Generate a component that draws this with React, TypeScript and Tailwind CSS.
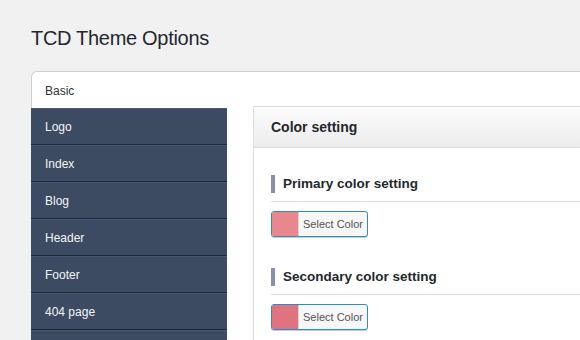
import React from "react";

const menu = ["Logo", "Index", "Blog", "Header", "Footer", "404 page", ""];

function ColorField({ label, swatch }: { label: string; swatch: string }) {
  return (
    <div className="pt-[27px]">
      <div className="flex items-center border-b border-[#dddddd] pb-[8px]">
        <span className="h-[18px] w-[4px] bg-[#8891a9]" />
        <h3 className="ml-[8px] text-[13.5px] font-bold leading-none text-[#23282d]">
          {label}
        </h3>
      </div>
      <button className="mt-[9px] flex h-[26px] w-[97px] overflow-hidden rounded-[3px] border border-[#3389c6] bg-[#f7f7f7] shadow-[0_1px_0_#ccc]">
        <span className={`h-full w-[27px] border-r border-[#d6d6d6] ${swatch}`} />
        <span className="flex-1 self-center text-center text-[11px] leading-none text-[#555]">
          Select Color
        </span>
      </button>
    </div>
  );
}

export default function App() {
  return (
    <div
      className="h-[340px] w-[580px] overflow-hidden bg-[#f1f1f1] pl-[31px] pt-[28px]"
      style={{ fontFamily: '"Liberation Sans", Arial, sans-serif' }}
    >
      <h1 className="text-[20px] leading-none tracking-[-0.3px] text-[#23282d]">
        TCD Theme Options
      </h1>

      <div className="mt-[23px] w-[620px] rounded-tl-[6px] border-l border-t border-[#d0d0d0] bg-white">
        <div className="flex h-[34px] items-center pl-[13px] pt-[3px] text-[12px] text-[#333]">
          Basic
        </div>

        <div className="flex">
          <ul className="-ml-px mt-[2px] w-[196px]">
            {menu.map((item, i) => (
              <li
                key={i}
                className="flex h-[37px] items-center border-b border-t border-b-[#1f2836] border-t-[#4b5871] bg-[#3c4a62] pl-[14px] text-[12px] text-[#f4f5f7]"
              >
                {item}
              </li>
            ))}
          </ul>

          <div className="ml-[26px] flex-1 border border-[#dddddd]">
            <div className="flex h-[41px] items-center border-b border-[#dddddd] bg-gradient-to-b from-[#fcfcfc] to-[#ececec] pl-[17px]">
              <h2 className="text-[14px] font-bold leading-none text-[#23282d]">
                Color setting
              </h2>
            </div>
            <div className="pl-[17px]">
              <ColorField label="Primary color setting" swatch="bg-[#e8878d]" />
              <div className="pt-[4px]">
                <ColorField label="Secondary color setting" swatch="bg-[#df737f]" />
              </div>
            </div>
          </div>
        </div>
      </div>
    </div>
  );
}
